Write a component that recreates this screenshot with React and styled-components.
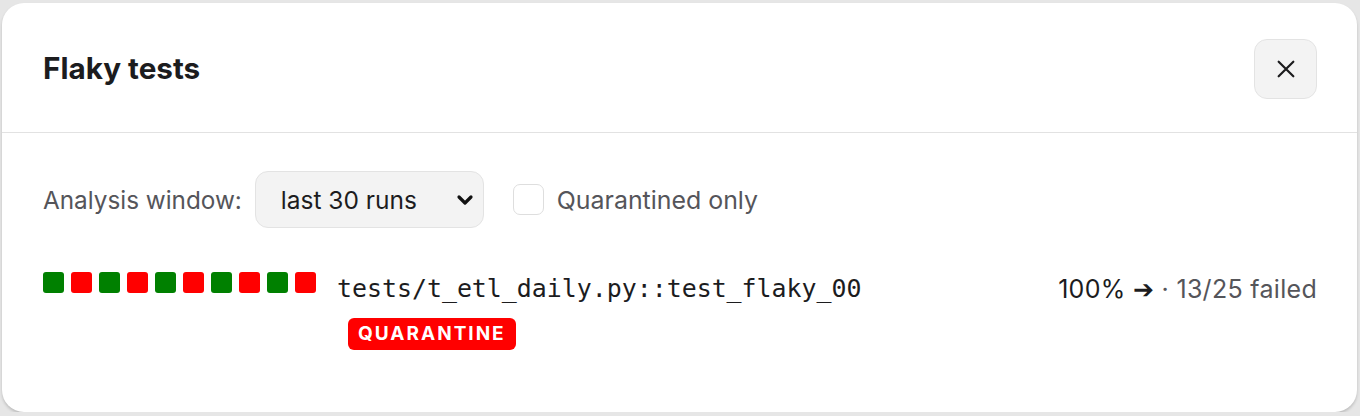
import React, { useState } from "react";
import styled, { createGlobalStyle } from "styled-components";

const GlobalStyle = createGlobalStyle`
  html, body {
    margin: 0;
    padding: 0;
    background: #e6e6e6;
  }
  body {
    font-family: Inter, "Noto Sans", "Liberation Sans", sans-serif;
    color: #1c1c1e;
  }
`;

const Dialog = styled.div`
  box-sizing: border-box;
  width: 1355px;
  height: 409px;
  margin: 3px 3px 0 2px;
  background: #fff;
  border-radius: 22px;
  box-shadow: 0 2px 3px rgba(0, 0, 0, 0.18);
  overflow: hidden;
`;

const Header = styled.div`
  display: flex;
  align-items: center;
  justify-content: space-between;
  height: 130px;
  padding: 0 40px 0 41px;
  border-bottom: 1px solid #e2e2e2;
  box-sizing: border-box;
`;

const Title = styled.h2`
  margin: 0;
  font-size: 29.7px;
  font-weight: 700;
  color: #1c1c1e;
`;

const CloseButton = styled.button`
  display: flex;
  align-items: center;
  justify-content: center;
  width: 63px;
  height: 60px;
  margin-top: 2px;
  padding: 0;
  background: #f3f3f3;
  border: 1px solid #e3e3e3;
  border-radius: 13px;
  cursor: pointer;
  color: #1c1c1e;
`;

const Body = styled.div`
  padding: 38px 40px 0 41px;
`;

const Controls = styled.div`
  display: flex;
  align-items: center;
  gap: 13px;
  height: 57px;
`;

const Label = styled.span`
  font-size: 24.3px;
  color: #55555a;
`;

const SelectWrap = styled.div`
  position: relative;
  display: flex;
  align-items: center;
  box-sizing: border-box;
  width: 229px;
  height: 57px;
  padding: 0 0 0 25px;
  background: #f3f3f3;
  border: 1px solid #e3e3e3;
  border-radius: 13px;
  font-size: 24.5px;
  color: #1c1c1e;
`;

const Chevron = styled.svg`
  position: absolute;
  right: 8px;
  top: 50%;
  margin-top: -7px;
`;

const CheckLabel = styled.label`
  display: flex;
  align-items: center;
  gap: 13px;
  margin-left: 16px;
  font-size: 24.9px;
  color: #55555a;
  cursor: pointer;
`;

const Box = styled.span`
  display: inline-block;
  box-sizing: border-box;
  width: 31px;
  height: 31px;
  border: 1.5px solid #dedede;
  border-radius: 7px;
  background: ${(p) => (p.checked ? "#1c1c1e" : "#fff")};
`;

const TestRow = styled.div`
  display: flex;
  align-items: flex-start;
  margin-top: 44px;
`;

const Runs = styled.div`
  display: flex;
  gap: 7px;
`;

const Run = styled.span`
  width: 21px;
  height: 21px;
  border-radius: 3px;
  background: ${(p) => (p.failed ? "#ff0000" : "#008000")};
`;

const TestInfo = styled.div`
  display: flex;
  flex-direction: column;
  align-items: flex-start;
  margin-left: 21px;
  flex: 1;
`;

const TestName = styled.div`
  font-family: "DejaVu Sans Mono", "Liberation Mono", monospace;
  font-size: 24.9px;
  line-height: 34px;
  color: #1c1c1e;
`;

const Badge = styled.span`
  margin-top: 12px;
  margin-left: 11px;
  padding: 0 10px;
  height: 32px;
  line-height: 32px;
  background: #ff0000;
  color: #fff;
  border-radius: 6px;
  font-size: 19px;
  font-weight: 700;
  letter-spacing: 2px;
`;

const Stats = styled.div`
  font-size: 25px;
  line-height: 34px;
  letter-spacing: 0.3px;
  color: #1c1c1e;
`;

const Muted = styled.span`
  color: #55555a;
`;

const runs = [false, true, false, true, false, true, false, true, false, true];

export default function App() {
  const [quarantined, setQuarantined] = useState(false);
  return (
    <>
      <GlobalStyle />
      <Dialog>
        <Header>
          <Title>Flaky tests</Title>
          <CloseButton aria-label="Close">
            <svg width="22" height="22" viewBox="0 0 24 24" fill="none" stroke="currentColor" strokeWidth="2.4" strokeLinecap="round">
              <path d="M4 4l16 16M20 4L4 20" />
            </svg>
          </CloseButton>
        </Header>
        <Body>
          <Controls>
            <Label>Analysis window:</Label>
            <SelectWrap>
              last 30 runs
              <Chevron width="20" height="14" viewBox="0 0 20 14" fill="none" stroke="#111" strokeWidth="3.2" strokeLinecap="round" strokeLinejoin="round">
                <path d="M4 4l6 6 6-6" />
              </Chevron>
            </SelectWrap>
            <CheckLabel onClick={() => setQuarantined(!quarantined)}>
              <Box checked={quarantined} />
              Quarantined only
            </CheckLabel>
          </Controls>
          <TestRow>
            <Runs>
              {runs.map((f, i) => (
                <Run key={i} failed={f} />
              ))}
            </Runs>
            <TestInfo>
              <TestName>tests/t_etl_daily.py::test_flaky_00</TestName>
              <Badge>QUARANTINE</Badge>
            </TestInfo>
            <Stats>
              {"100% ➔ "}
              <Muted>· 13/25 failed</Muted>
            </Stats>
          </TestRow>
        </Body>
      </Dialog>
    </>
  );
}
